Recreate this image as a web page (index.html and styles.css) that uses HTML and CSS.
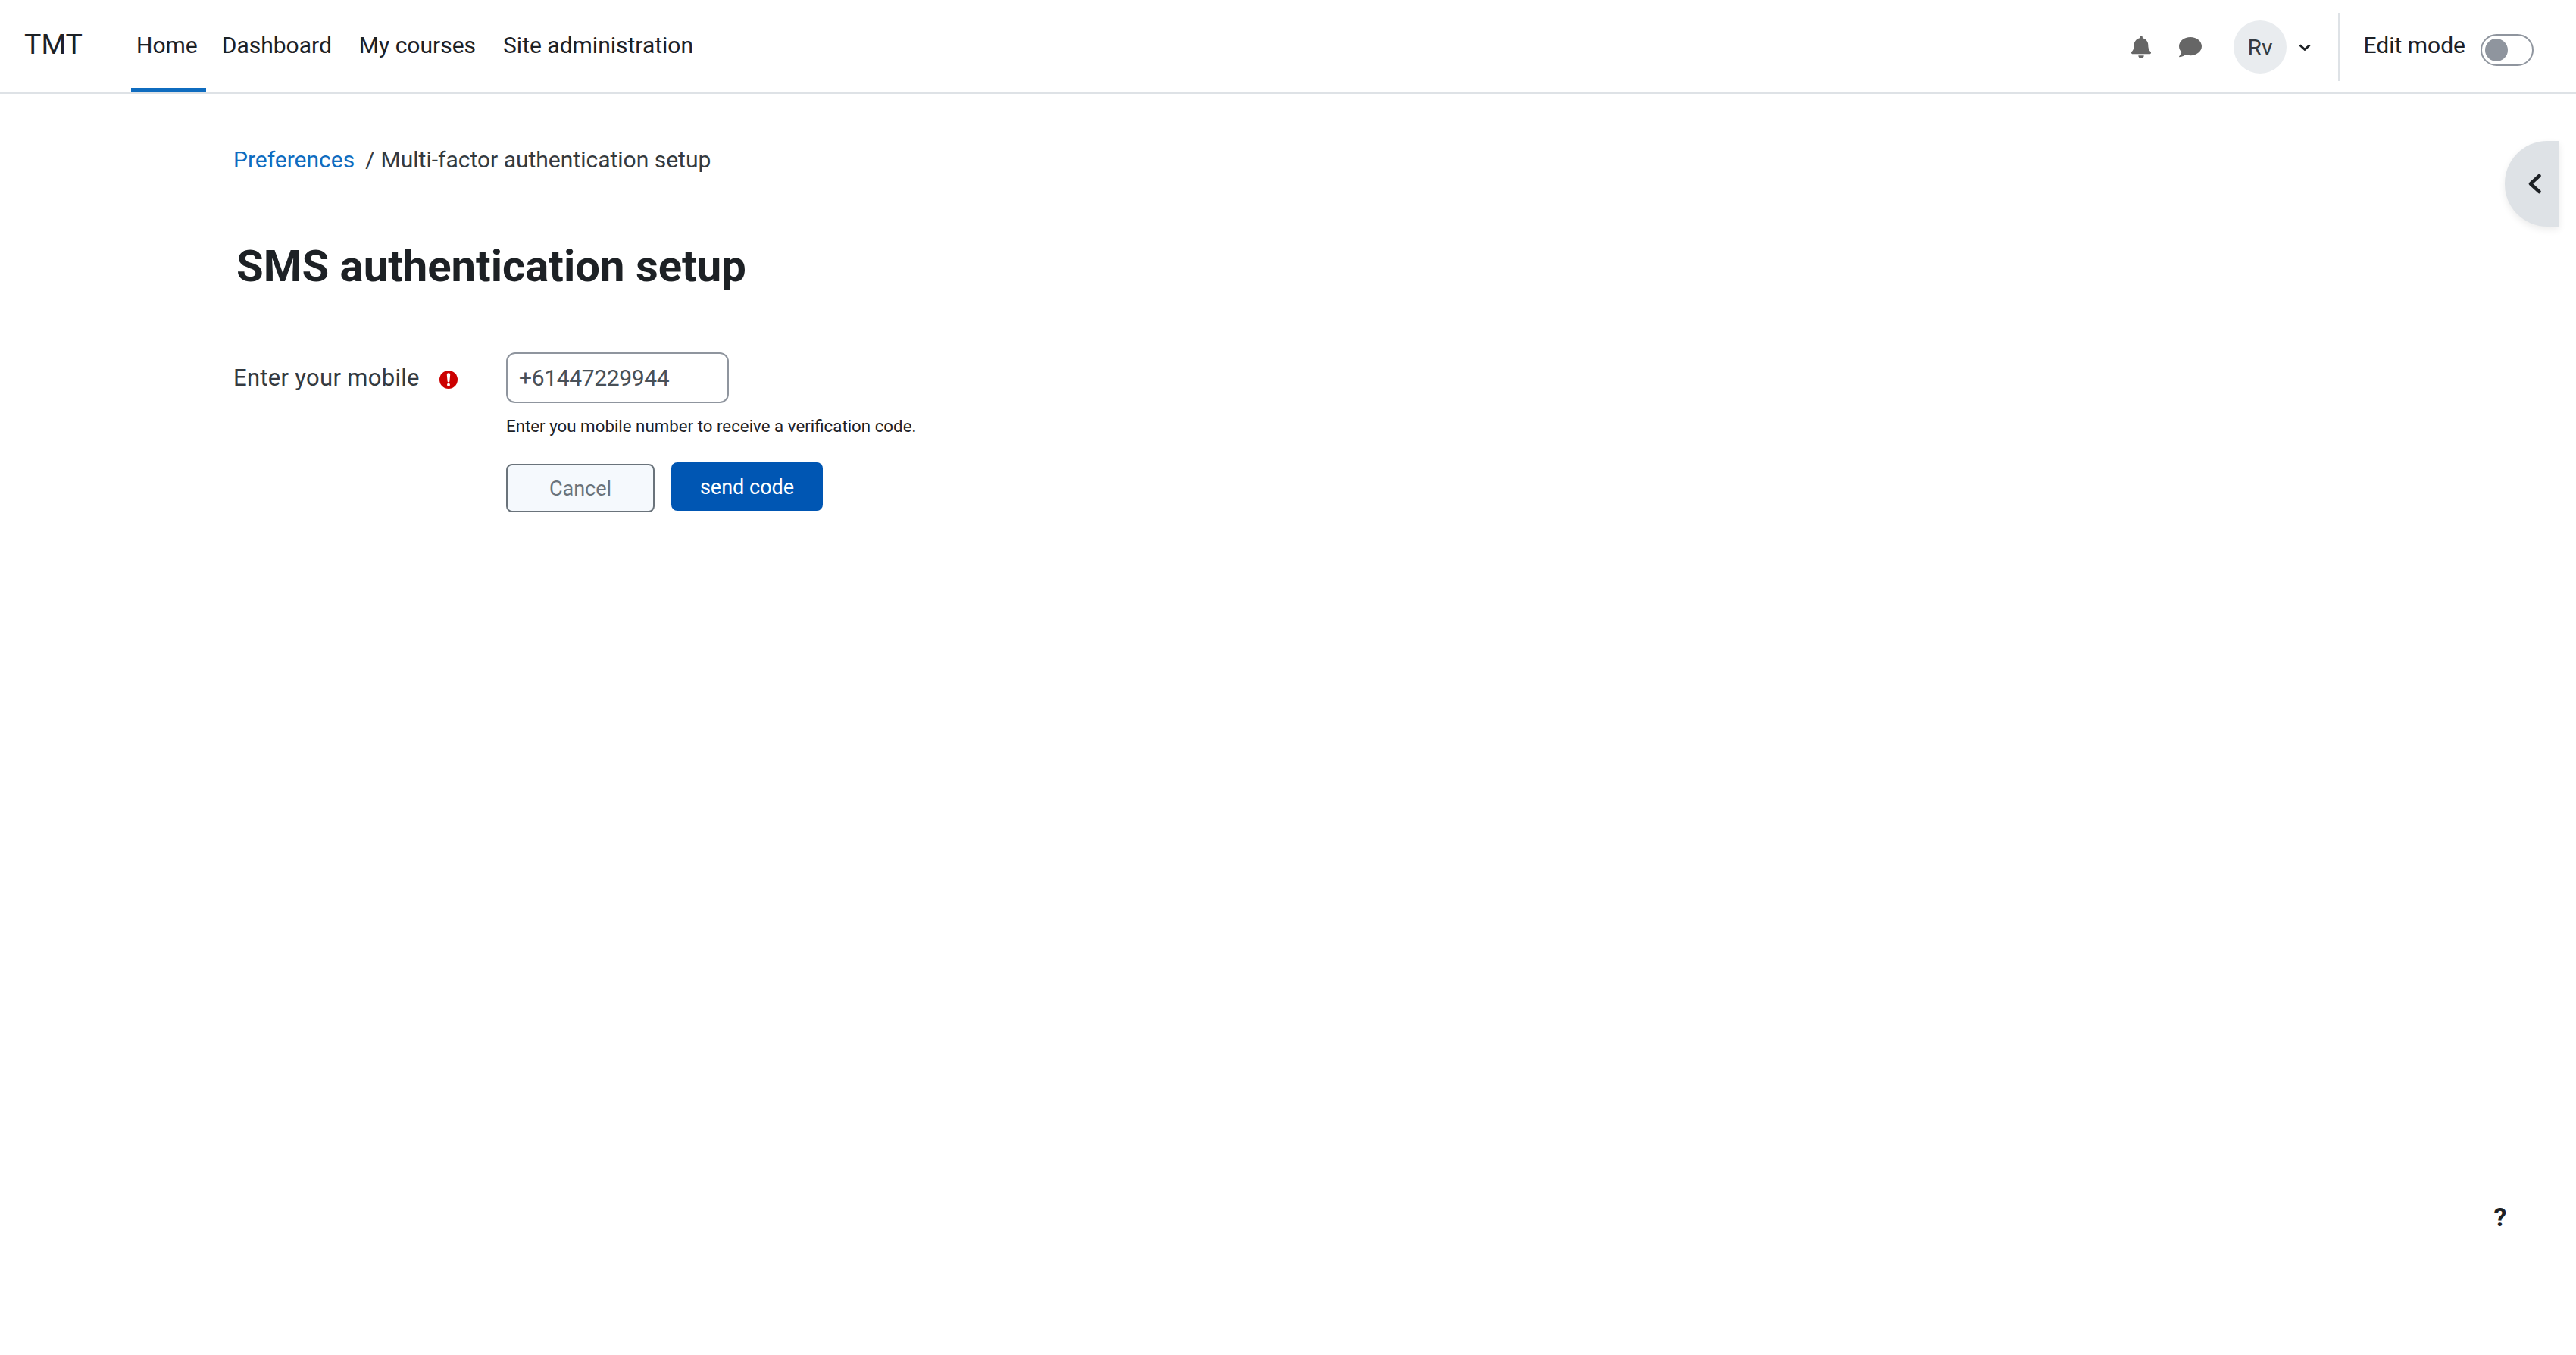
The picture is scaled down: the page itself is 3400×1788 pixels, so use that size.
FILE: index.html
```html
<!DOCTYPE html>
<html lang="en">
<head>
<meta charset="utf-8">
<title>SMS authentication setup</title>
<link rel="stylesheet" href="styles.css">
</head>
<body>
<header class="navbar">
  <a class="brand">TMT</a>
  <nav class="primary">
    <a class="nav-link active">Home</a>
    <a class="nav-link">Dashboard</a>
    <a class="nav-link">My courses</a>
    <a class="nav-link">Site administration</a>
  </nav>
  <div class="nav-right">
    <svg class="icon bell" viewBox="0 0 448 512"><path d="M224 512c35.300 0 64-28.700 64-64H160c0 35.300 28.700 64 64 64zm215.400-149.700c-19.300-20.800-55.500-52-55.500-154.300 0-77.700-54.500-139.900-127.900-155.200V32c0-17.700-14.300-32-32-32s-32 14.300-32 32v20.800C118.600 68.100 64.100 130.300 64.100 208c0 102.300-36.200 133.500-55.500 154.300-6 6.400-8.600 14.100-8.600 21.700.1 16.400 13 32 32.100 32h383.800c19.100 0 32-15.600 32.100-32 0-7.600-2.700-15.300-8.600-21.700z"/></svg>
    <svg class="icon chat" viewBox="0 0 512 512"><path d="M256 32C114.600 32 0 125.100 0 240c0 49.600 21.400 95 57 130.700C44.500 421.100 2.700 466 2.200 466.500c-2.200 2.300-2.800 5.700-1.500 8.700S4.800 480 8 480c66.300 0 116-31.800 140.600-51.400 32.700 12.300 69 19.400 107.400 19.400 141.400 0 256-93.100 256-208S397.400 32 256 32z"/></svg>
    <div class="avatar">Rv</div>
    <svg class="caret" viewBox="0 0 16 9"><path d="M1.500 1.500L8 7.300l6.500-5.800"/></svg>
    <div class="divider"></div>
    <span class="edit-label">Edit mode</span>
    <span class="toggle"><span class="knob"></span></span>
  </div>
</header>

<main class="page">
  <div class="breadcrumb"><a class="crumb-link">Preferences</a><span class="crumb-sep">/</span><span>Multi-factor authentication setup</span></div>
  <h1 class="title">SMS authentication setup</h1>
  <form class="form">
    <div class="label-col">
      <span class="label">Enter your mobile</span>
      <svg class="required" viewBox="0 0 24 24"><circle cx="12" cy="12" r="12"/><path class="mark" d="M9.800 5.500a2.200 2.200 0 0 1 4.400 0L13.400 14a1.400 1.400 0 0 1-2.800 0z"/><circle class="mark" cx="12" cy="18.800" r="2"/></svg>
    </div>
    <div class="field-col">
      <div class="input">+61447229944</div>
      <div class="help">Enter you mobile number to receive a verification code.</div>
      <div class="buttons">
        <button type="button" class="btn cancel">Cancel</button>
        <button type="button" class="btn send">send code</button>
      </div>
    </div>
  </form>
</main>

<button type="button" class="drawer-toggle">
  <svg viewBox="0 0 17 27"><path d="M14.500 3L3 13.500 14.500 24"/></svg>
</button>
<div class="help-fab">?</div>
</body>
</html>
```
FILE: styles.css
```css
* { box-sizing: border-box; }
html, body { margin: 0; padding: 0; }
body {
  width: 3400px;
  height: 1788px;
  position: relative;
  overflow: hidden;
  background: #fff;
  color: #1d2125;
  font-family: Roboto, "Liberation Sans", sans-serif;
  font-size: 30px;
}
.navbar {
  height: 124px;
  display: flex;
  align-items: stretch;
  border-bottom: 2px solid #dee2e6;
  padding-left: 32px;
}
.brand {
  font-size: 37.500px;
  line-height: 116px;
  width: 141px;
  flex: none;
}
.primary { display: flex; }
.nav-link {
  line-height: 120px;
  padding: 0 6px;
  margin-right: 24px;
  position: relative;
}
.nav-link.active {
  padding: 0 11px 0 7px;
  margin-right: 15px;
}
.nav-link.active::after {
  content: "";
  position: absolute;
  left: 0;
  right: 0;
  bottom: 0;
  height: 6px;
  background: #0f6cbf;
}
.nav-right {
  margin-left: auto;
  display: flex;
  align-items: center;
  padding: 2px 56px 0 0;
}
.icon { fill: #666; display: block; }
.bell { width: 26px; height: 30px; }
.chat { width: 30px; height: 30px; margin-left: 37px; }
.avatar {
  width: 70px;
  height: 70px;
  border-radius: 50%;
  background: #e9ecef;
  color: #343a40;
  margin-left: 42px;
  text-align: center;
  line-height: 72px;
}
.caret {
  width: 16px;
  height: 9px;
  margin-left: 16px;
  fill: none;
  stroke: #1d2125;
  stroke-width: 3;
}
.divider {
  width: 2px;
  height: 90px;
  background: #dee2e6;
  margin: 0 31.500px 0 36px;
}
.edit-label { line-height: 60px; margin-top: -4px; }
.toggle {
  width: 70px;
  height: 42px;
  border: 2px solid #8f959e;
  border-radius: 21px;
  margin-left: 20px;
  padding: 4px;
  margin-top: 7px;
}
.knob {
  display: block;
  width: 30px;
  height: 30px;
  border-radius: 50%;
  background: #8f959e;
}
.page { padding: 63px 0 0 308px; }
.breadcrumb { line-height: 48px; color: #343a40; display: flex; }
.crumb-link { color: #0f6cbf; }
.crumb-sep { margin: 0 8px 0 14px; }
.title {
  font-size: 58px;
  font-weight: 700;
  line-height: 68px;
  margin: 82px 0 0 4px;
  color: #1d2125;
}
.form { display: flex; margin-top: 80px; }
.label-col { width: 360px; flex: none; display: flex; align-items: center; height: 67px; color: #343a40; }
.label { font-size: 31px; letter-spacing: 0.300px; }
.required { width: 24px; height: 24px; margin: 4px 0 0 26px; }
.required > circle:first-child { fill: #c00; }
.required .mark { fill: #fff; }
.input {
  width: 294px;
  height: 67px;
  border: 2px solid #8f959e;
  border-radius: 12px;
  padding: 0 15px;
  line-height: 63px;
  letter-spacing: -0.350px;
  color: #495057;
}
.help { font-size: 22.300px; line-height: 32px; margin-top: 14px; color: #1d2125; }
.buttons { display: flex; gap: 22px; margin-top: 32px; align-items: flex-start; }
.btn {
  font-family: inherit;
  font-size: 27px;
  border-radius: 8px;
  height: 64px;
  padding: 2px 0 0;
}
.cancel {
  width: 196px;
  margin-top: 2px;
  background: #f5f9fd;
  color: #6a737b;
  border: 2px solid #6a737b;
}
.send { width: 200px; background: #0056b3; color: #fff; border: 0; }
.drawer-toggle {
  position: absolute;
  top: 186px;
  left: 3306px;
  width: 72px;
  height: 113px;
  padding: 0 0 0 31px;
  border: 0;
  background: #dee2e6;
  border-radius: 56px 0 0 56px;
  box-shadow: 0 4px 10px rgba(0,0,0,.08);
  display: flex;
  align-items: center;
}
.drawer-toggle svg {
  width: 17px;
  height: 27px;
  fill: none;
  stroke: #1d2125;
  stroke-width: 4.500;
  stroke-linecap: round;
  stroke-linejoin: round;
}
.help-fab {
  position: absolute;
  left: 3285px;
  top: 1586px;
  width: 30px;
  font-size: 34px;
  font-weight: 700;
  text-align: center;
  line-height: 40px;
}
```
